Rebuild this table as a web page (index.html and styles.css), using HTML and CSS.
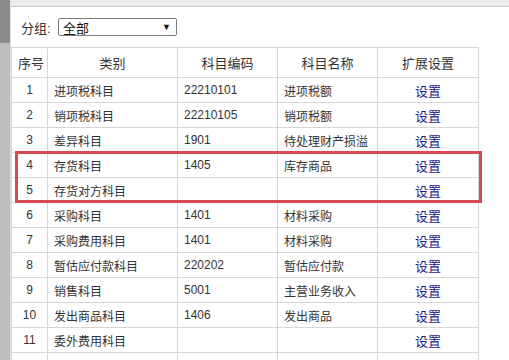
FILE: index.html
```html
<!DOCTYPE html>
<html>
<head>
    <meta charset="utf-8">
    <title>科目设置</title>
    <link rel="stylesheet" href="styles.css">
</head>
<body>
    <div class="page">
        <div class="side"></div>

        <div class="main">
            <div class="topbar"></div>

            <div class="toolbar">
                <label>分组:</label>
                <div class="select">
                    <span>全部</span>
                    <span class="arrow">▼</span>
                </div>
            </div>

            <div class="grade">
                <table>
                    <thead>
                        <tr>
                            <th class="col-num">序号</th>
                            <th class="col-tipo">类别</th>
                            <th class="col-cod">科目编码</th>
                            <th class="col-nome">科目名称</th>
                            <th class="col-ext">扩展设置</th>
                        </tr>
                    </thead>
                    <tbody>
                        <tr><td class="num">1</td><td>进项税科目</td><td>22210101</td><td>进项税额</td><td class="ext"><a href="#">设置</a></td></tr>
                        <tr><td class="num">2</td><td>销项税科目</td><td>22210105</td><td>销项税额</td><td class="ext"><a href="#">设置</a></td></tr>
                        <tr><td class="num">3</td><td>差异科目</td><td>1901</td><td>待处理财产损溢</td><td class="ext"><a href="#">设置</a></td></tr>
                        <tr><td class="num">4</td><td>存货科目</td><td>1405</td><td>库存商品</td><td class="ext"><a href="#">设置</a></td></tr>
                        <tr><td class="num">5</td><td>存货对方科目</td><td></td><td></td><td class="ext"><a href="#">设置</a></td></tr>
                        <tr><td class="num">6</td><td>采购科目</td><td>1401</td><td>材料采购</td><td class="ext"><a href="#">设置</a></td></tr>
                        <tr><td class="num">7</td><td>采购费用科目</td><td>1401</td><td>材料采购</td><td class="ext"><a href="#">设置</a></td></tr>
                        <tr><td class="num">8</td><td>暂估应付款科目</td><td>220202</td><td>暂估应付款</td><td class="ext"><a href="#">设置</a></td></tr>
                        <tr><td class="num">9</td><td>销售科目</td><td>5001</td><td>主营业务收入</td><td class="ext"><a href="#">设置</a></td></tr>
                        <tr><td class="num">10</td><td>发出商品科目</td><td>1406</td><td>发出商品</td><td class="ext"><a href="#">设置</a></td></tr>
                        <tr><td class="num">11</td><td>委外费用科目</td><td></td><td></td><td class="ext"><a href="#">设置</a></td></tr>
                        <tr><td class="num">12</td><td>委外加工科目</td><td>1408</td><td>委托加工物资</td><td class="ext"><a href="#">设置</a></td></tr>
                    </tbody>
                </table>

                <!-- destaque das linhas 4 e 5 -->
                <div class="destaque"></div>
            </div>
        </div>
    </div>
</body>
</html>
```

FILE: styles.css
```css
body {
    margin: 0;
    font-family: "Liberation Sans", Arial, "Noto Sans CJK SC", sans-serif;
    font-size: 12px;
    color: #333;
    background: #fff;
}

.page {
    display: flex;
    height: 360px;
    overflow: hidden;
}

.side {
    width: 10px;
    flex-shrink: 0;
    background: linear-gradient(#8b8b8b 0, #8b8b8b 43px, #bdbdbd 43px);
    border-right: 1px solid #e2e2e2;
}

.main {
    flex: 1;
    display: flex;
    flex-direction: column;
}

.main > * {
    flex-shrink: 0;
}

.topbar {
    height: 6px;
    background: #ececec;
    border-bottom: 1px solid #c6c6c6;
}

.toolbar {
    display: flex;
    align-items: center;
    height: 40px;
    padding-left: 10px;
}

.toolbar label {
    width: 37px;
    font-size: 13px;
}

.select {
    display: flex;
    align-items: center;
    justify-content: space-between;
    box-sizing: border-box;
    width: 119px;
    height: 18px;
    padding: 0 5px 0 4px;
    border: 1px solid #7b7b7b;
    border-radius: 2px;
    font-size: 13px;
    color: #111;
}

.select .arrow {
    font-size: 9px;
    color: #111;
}

.grade {
    position: relative;
    align-self: flex-start;
}

table {
    width: 466px;
    border-collapse: collapse;
    table-layout: fixed;
}

th,
td {
    border: 1px solid #d6d6d6;
    padding: 0 6px;
    height: 24px;
    text-align: left;
    white-space: nowrap;
    overflow: hidden;
}

th {
    height: 29px;
    font-weight: normal;
    text-align: center;
    font-size: 13px;
}

.col-num { width: 23px; }
.col-tipo { width: 117px; }
.col-cod { width: 87px; }
.col-nome { width: 87px; }
.col-ext { width: 88px; }

td.num,
td.ext {
    text-align: center;
}

td a {
    color: #1b1b8c;
    text-decoration: none;
    font-size: 13px;
}

.destaque {
    position: absolute;
    left: 4px;
    top: 104px;
    width: 467px;
    height: 52px;
    box-sizing: border-box;
    border: 3px solid #d84a4f;
}
```
